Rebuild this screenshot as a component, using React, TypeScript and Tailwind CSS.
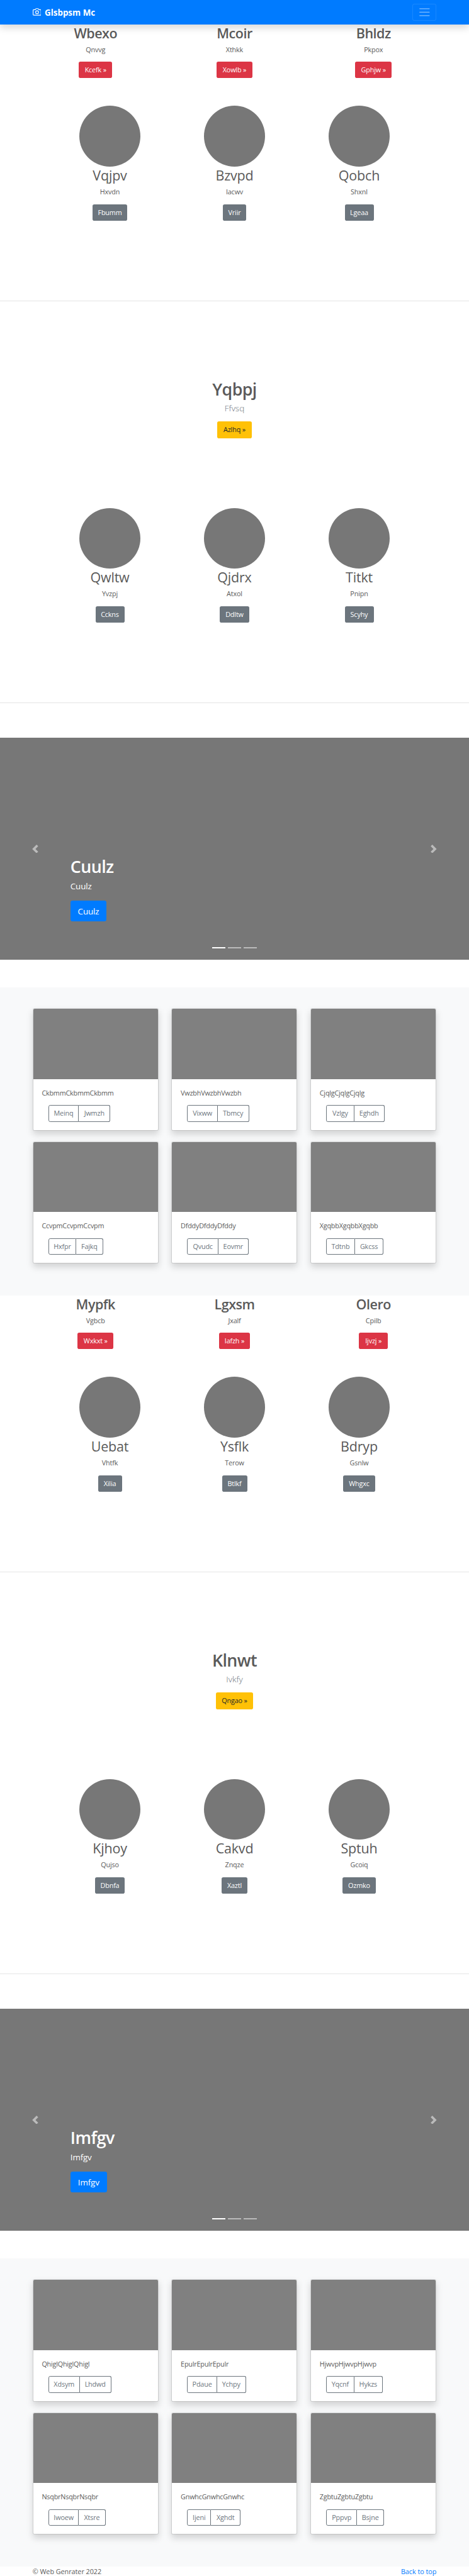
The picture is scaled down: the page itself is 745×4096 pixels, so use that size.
import React from "react";

type Item = { title: string; text: string; btn: string; w: string };
type Card = { text: string; a: string; b: string; aw: string; bw: string };
type Block = {
  trio: Item[];
  first: Item[];
  lead: Item;
  second: Item[];
  slide: string;
  slideW: string;
  cards: Card[];
};

const blocks: Block[] = [
  {
    trio: [
      { title: "Wbexo", text: "Qnvvg", btn: "Kcefk »", w: "w-[52.7px]" },
      { title: "Mcoir", text: "Xthkk", btn: "Xowlb »", w: "w-[57px]" },
      { title: "Bhldz", text: "Pkpox", btn: "Gphjw »", w: "w-[58px]" },
    ],
    first: [
      { title: "Vqjpv", text: "Hxvdn", btn: "Fbumm", w: "w-[55.2px]" },
      { title: "Bzvpd", text: "Iacwv", btn: "Vriir", w: "w-[37px]" },
      { title: "Qobch", text: "Shxnl", btn: "Lgeaa", w: "w-[46px]" },
    ],
    lead: { title: "Yqbpj", text: "Ffvsq", btn: "Azlhq »", w: "w-[54.2px]" },
    second: [
      { title: "Qwltw", text: "Yvzpj", btn: "Cckns", w: "w-[46px]" },
      { title: "Qjdrx", text: "Atxol", btn: "Ddltw", w: "w-[46.6px]" },
      { title: "Titkt", text: "Pnipn", btn: "Scyhy", w: "w-[46px]" },
    ],
    slide: "Cuulz",
    slideW: "w-[57.4px]",
    cards: [
      { text: "CkbmmCkbmmCkbmm", a: "Meinq", b: "Jwmzh", aw: "w-[48.4px]", bw: "w-[50.2px]" },
      { text: "VwzbhVwzbhVwzbh", a: "Vixww", b: "Tbmcy", aw: "w-[48.2px]", bw: "w-[50px]" },
      { text: "CjqlgCjqlgCjqlg", a: "Vzlgy", b: "Eghdh", aw: "w-[44.4px]", bw: "w-[48.5px]" },
      { text: "CcvpmCcvpmCcvpm", a: "Hxfpr", b: "Fajkq", aw: "w-[44.4px]", bw: "w-[42.5px]" },
      { text: "DfddyDfddyDfddy", a: "Qvudc", b: "Eovmr", aw: "w-[49.4px]", bw: "w-[47.9px]" },
      { text: "XgqbbXgqbbXgqbb", a: "Tdtnb", b: "Gkcss", aw: "w-[45.6px]", bw: "w-[45.6px]" },
    ],
  },
  {
    trio: [
      { title: "Mypfk", text: "Vgbcb", btn: "Wxkxt »", w: "w-[56.6px]" },
      { title: "Lgxsm", text: "Jxalf", btn: "Iafzh »", w: "w-[49.4px]" },
      { title: "Olero", text: "Cpilb", btn: "Ijvzj »", w: "w-[45.5px]" },
    ],
    first: [
      { title: "Uebat", text: "Vhtfk", btn: "Xilia", w: "w-[38px]" },
      { title: "Ysflk", text: "Terow", btn: "Btlkf", w: "w-[40px]" },
      { title: "Bdryp", text: "Gsnlw", btn: "Whgxc", w: "w-[50.8px]" },
    ],
    lead: { title: "Klnwt", text: "Ivkfy", btn: "Qngao »", w: "w-[59px]" },
    second: [
      { title: "Kjhoy", text: "Qujso", btn: "Dbnfa", w: "w-[47.5px]" },
      { title: "Cakvd", text: "Znqze", btn: "Xaztl", w: "w-[41.8px]" },
      { title: "Sptuh", text: "Gcoiq", btn: "Ozmko", w: "w-[52.7px]" },
    ],
    slide: "Imfgv",
    slideW: "w-[58px]",
    cards: [
      { text: "QhiglQhiglQhigl", a: "Xdsym", b: "Lhdwd", aw: "w-[49.8px]", bw: "w-[50.2px]" },
      { text: "EpulrEpulrEpulr", a: "Pdaue", b: "Ychpy", aw: "w-[47.2px]", bw: "w-[46.2px]" },
      { text: "HjwvpHjwvpHjwvp", a: "Yqcnf", b: "Hykzs", aw: "w-[44.4px]", bw: "w-[45.6px]" },
      { text: "NsqbrNsqbrNsqbr", a: "Iwoew", b: "Xtsre", aw: "w-[48.6px]", bw: "w-[42.3px]" },
      { text: "GnwhcGnwhcGnwhc", a: "Ijeni", b: "Xghdt", aw: "w-[37.7px]", bw: "w-[47px]" },
      { text: "ZgbtuZgbtuZgbtu", a: "Pppvp", b: "Bsjne", aw: "w-[49.2px]", bw: "w-[42.7px]" },
    ],
  },
];

const btnBase =
  "flex h-[26.2px] items-center justify-center whitespace-nowrap rounded-[2.8px] text-[10.8px] tracking-[-0.15px]";

function Header() {
  return (
    <header className="relative z-10 flex h-[38.65px] items-center justify-between bg-[#007bff] px-[51.7px] shadow-[0_5.5px_11px_rgba(0,0,0,0.15)]">
      <div className="flex items-center text-white">
        <svg
          className="mr-[5.5px] size-[13.8px]"
          viewBox="0 0 24 24"
          fill="none"
          stroke="currentColor"
          strokeWidth="2"
          strokeLinecap="round"
          strokeLinejoin="round"
        >
          <path d="M23 19a2 2 0 0 1-2 2H3a2 2 0 0 1-2-2V8a2 2 0 0 1 2-2h4l2-3h6l2 3h4a2 2 0 0 1 2 2z" />
          <circle cx="12" cy="13" r="4" />
        </svg>
        <strong className="pt-px text-[13.4px] leading-[20px] font-bold">Glsbpsm Mc</strong>
      </div>
      <button className="flex h-[27.6px] w-[38.6px] items-center justify-center rounded-[2.8px] border border-white/10">
        <svg className="size-[20.7px]" viewBox="0 0 30 30" fill="none" stroke="rgba(255,255,255,0.5)" strokeWidth="2" strokeLinecap="round">
          <path d="M4 7h22M4 15h22M4 23h22" />
        </svg>
      </button>
    </header>
  );
}

function Trio({ items }: { items: Item[] }) {
  return (
    <section className="mx-auto grid h-[129.75px] w-[662.2px] grid-cols-3">
      {items.map((it) => (
        <div key={it.title} className="flex flex-col items-center">
          <h2 className="mb-[5.5px] h-[26.5px] pt-px text-[21.5px] leading-[26.5px] font-semibold tracking-[-0.5px]">{it.title}</h2>
          <p className="mb-[11px] h-[16.6px] text-[10.8px] leading-[16.6px] tracking-[-0.15px]">{it.text}</p>
          <a className={`${btnBase} ${it.w} bg-[#dc3545] text-white`}>{it.btn}</a>
        </div>
      ))}
    </section>
  );
}

function Circles({ items, height }: { items: Item[]; height: string }) {
  return (
    <section className={`mx-auto grid w-[594px] grid-cols-3 ${height}`}>
      {items.map((it) => (
        <div key={it.title} className="flex flex-col items-center">
          <div className="size-[96.6px] shrink-0 rounded-full bg-[#777]" />
          <h2 className="mb-[5.5px] h-[26.5px] pt-px text-[21.5px] leading-[26.5px] tracking-[-0.2px]">{it.title}</h2>
          <p className="mb-[11px] h-[16.6px] text-[10.8px] leading-[16.6px] tracking-[-0.15px]">{it.text}</p>
          <a className={`${btnBase} ${it.w} bg-[#6c757d] text-white`}>{it.btn}</a>
        </div>
      ))}
    </section>
  );
}

function Lead({ item }: { item: Item }) {
  return (
    <section className="flex h-[329.2px] flex-col items-center border-t border-[#e5e5e5] pt-[120.7px]">
      <h1 className="mb-[5.5px] h-[33.1px] pt-[1.5px] text-[26.8px] leading-[33.1px] font-semibold tracking-[-0.6px]">{item.title}</h1>
      <p className="mb-[11px] h-[20.7px] text-[13.5px] leading-[20.7px] font-light text-[#6c757d]">{item.text}</p>
      <a className={`${btnBase} ${item.w} bg-[#ffc107] text-[#212529]`}>{item.btn}</a>
    </section>
  );
}

function Carousel({ label, width }: { label: string; width: string }) {
  return (
    <section className="relative h-[353.4px] bg-[#777] pt-[187px] pl-[111.8px] text-white">
      <h1 className="mb-[5.5px] h-[33.1px] pt-[1.5px] text-[26.8px] leading-[33.1px] font-semibold tracking-[-0.5px]">{label}</h1>
      <p className="mb-[13.2px] h-[20.7px] pt-[0.5px] text-[13.4px] leading-[20.7px] tracking-[-0.15px]">{label}</p>
      <a className={`flex h-[33.1px] items-center justify-center rounded-[3.3px] bg-[#007bff] text-[13.4px] tracking-[-0.15px] ${width}`}>
        {label}
      </a>
      <div className="absolute inset-y-0 left-0 flex w-[111.8px] items-center justify-center">
        <svg className="size-[13.8px]" viewBox="0 0 8 8" fill="#fff" opacity="0.5">
          <path d="M5.25 0l-4 4 4 4 1.5-1.5L4.25 4l2.5-2.5L5.25 0z" />
        </svg>
      </div>
      <div className="absolute inset-y-0 right-0 flex w-[111.8px] items-center justify-center">
        <svg className="size-[13.8px]" viewBox="0 0 8 8" fill="#fff" opacity="0.5">
          <path d="M2.75 0l-1.5 1.5L3.75 4l-2.5 2.5L2.75 8l4-4-4-4z" />
        </svg>
      </div>
      <div className="absolute inset-x-0 bottom-[18px] flex justify-center gap-[4.1px]">
        <span className="h-[2px] w-[20.7px] bg-white" />
        <span className="h-[2px] w-[20.7px] bg-white/50" />
        <span className="h-[2px] w-[20.7px] bg-white/50" />
      </div>
    </section>
  );
}

function Gallery({ cards }: { cards: Card[] }) {
  return (
    <section className="h-[489.4px] bg-[#f8f9fa] pt-[33.1px]">
      <div className="mx-auto grid w-[641.4px] grid-cols-3 gap-x-[20.7px] gap-y-[16.6px]">
        {cards.map((c) => (
          <div
            key={c.text}
            className="h-[194.7px] overflow-hidden rounded-[2.8px] border border-black/10 bg-white bg-clip-padding shadow-[0_5.5px_11px_rgba(0,0,0,0.15)]"
          >
            <div className="h-[111.6px] bg-[#808080]" />
            <div className="px-[13.6px] pt-[13.8px]">
              <p className="mb-[11px] h-[16.6px] text-[10.8px] leading-[16.6px] tracking-[-0.2px]">{c.text}</p>
              <div className="ml-[10.4px] flex h-[26.2px] text-[10.8px] leading-[24px] tracking-[-0.15px] text-[#6c757d]">
                <span className={`rounded-l-[2.8px] border border-[#6c757d] text-center ${c.aw}`}>{c.a}</span>
                <span className={`rounded-r-[2.8px] border border-l-0 border-[#6c757d] text-center ${c.bw}`}>{c.b}</span>
              </div>
            </div>
          </div>
        ))}
      </div>
    </section>
  );
}

export default function App() {
  return (
    <div className="h-[4096px] w-[745px] overflow-hidden bg-white font-['Open_Sans','Noto_Sans',sans-serif] text-[#5a5a5a]">
      <Header />
      {blocks.map((b) => (
        <main key={b.slide}>
          <Trio items={b.trio} />
          <Circles items={b.first} height="h-[310px]" />
          <Lead item={b.lead} />
          <Circles items={b.second} height="h-[309.3px]" />
          <hr className="mb-[54.9px] border-t border-[#e5e5e5]" />
          <Carousel label={b.slide} width={b.slideW} />
          <div className="h-[44.1px]" />
          <Gallery cards={b.cards} />
        </main>
      ))}
      <footer className="flex h-[15px] justify-between px-[51.7px] text-[10.8px] leading-[15.4px] tracking-[-0.03px]">
        <span>© Web Genrater 2022</span>
        <a className="text-[#007bff]">Back to top</a>
      </footer>
    </div>
  );
}
